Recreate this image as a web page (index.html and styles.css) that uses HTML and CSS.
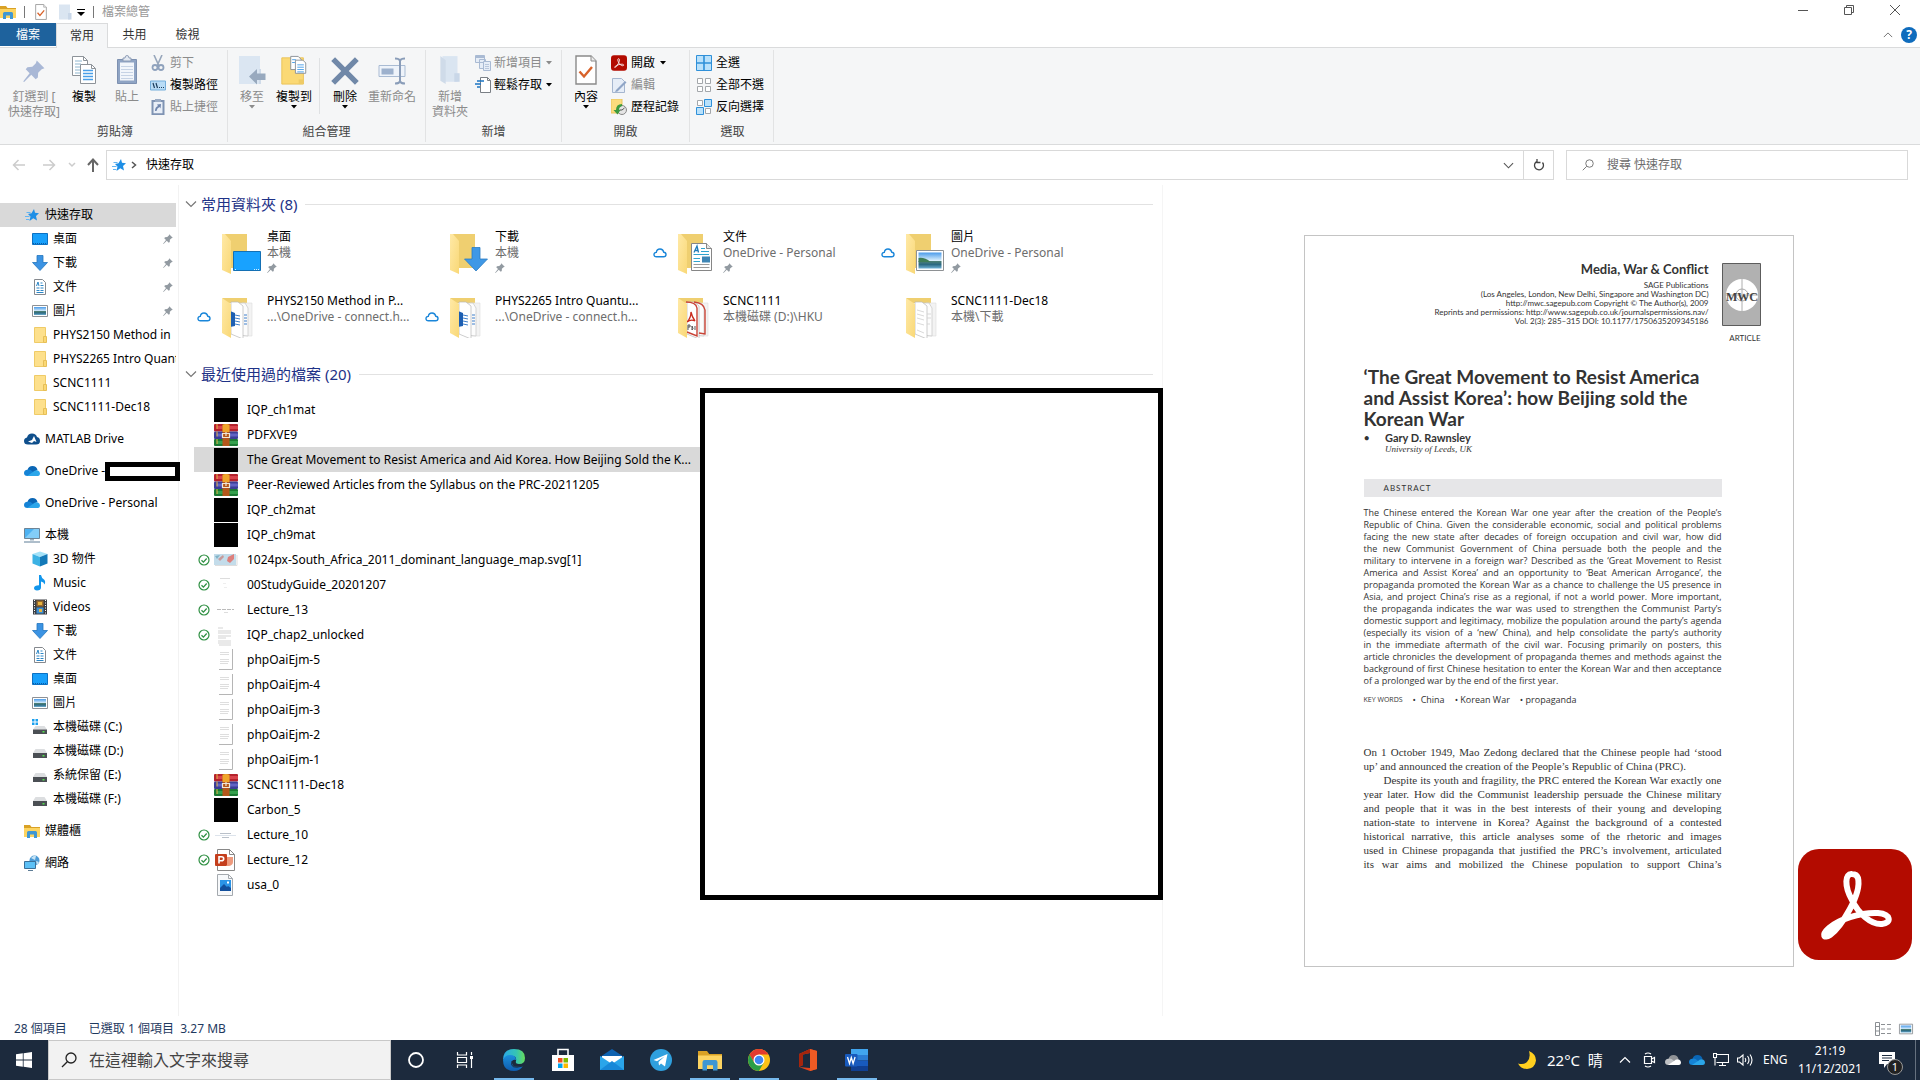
FILE: index.html
```html
<!DOCTYPE html>
<html lang="zh-Hant">
<head>
<meta charset="utf-8">
<meta name="viewport" content="width=device-width, initial-scale=1">
<title>檔案總管</title>
<link rel="stylesheet" href="styles.css">
</head>
<body>
<svg class="sprite" aria-hidden="true">
  <defs>
    <linearGradient id="g-flap" x1="0" x2="1" y1="0" y2="1"><stop offset="0" stop-color="#ffe9a6"/><stop offset="1" stop-color="#f9d877"/></linearGradient>
    <linearGradient id="g-sky" x1="0" x2="0" y1="0" y2="1"><stop offset="0" stop-color="#4a9bea"/><stop offset=".5" stop-color="#d9eefb"/><stop offset=".55" stop-color="#4d7f74"/><stop offset=".75" stop-color="#2c6a83"/><stop offset="1" stop-color="#6fb0d4"/></linearGradient>
    <linearGradient id="g-edge" x1="0" x2="1" y1="0" y2="0"><stop offset="0" stop-color="#2aa8e8"/><stop offset=".6" stop-color="#35c4b4"/><stop offset="1" stop-color="#67dc5a"/></linearGradient>
    <linearGradient id="g-edge2" x1="0" x2="0" y1="0" y2="1"><stop offset="0" stop-color="#1b8fdc"/><stop offset="1" stop-color="#0f5cae"/></linearGradient>
  </defs>
  <symbol id="explorer" viewBox="0 0 16 16"><path d="M0 2h6l1.500 2H16v3H0z" fill="#d9a125"/><path d="M0 5h16v9H0z" fill="#fcd462"/><path d="M3 15V9.500q0-1.500 1.500-1.500h7q1.500 0 1.500 1.500V15h-3v-3.500H6V15z" fill="#3f97d3"/></symbol>
  <symbol id="doc-check" viewBox="0 0 22 30"><path d="M1 1h15l5 5v23H1z" fill="#fff" stroke="#8a8a8a" stroke-width="1.400"/><path d="M16 1v5h5" fill="#ececec" stroke="#8a8a8a"/><path d="M4.500 16.500l4.500 5 8-9.500" fill="none" stroke="#d8622a" stroke-width="2.400"/></symbol>
  <symbol id="folder-pale" viewBox="0 0 20 28"><path d="M3 1h14v24H3z" fill="#dae5f1"/><path d="M1 1l5 4v22l-5-3z" fill="#cfdbe9"/><path d="M14 17h5v8h-5z" fill="#c9d7e8"/></symbol>
  <symbol id="folder-flat" viewBox="0 0 14 16"><path d="M1 .500h11v15H1z" fill="#dae5f1"/><path d="M10 9h3.500v6.500H10z" fill="#c9d7e8"/></symbol>
  <symbol id="pin" viewBox="0 0 20 20"><path d="M12.500.500l7 7-2.500.800-3.200 3.200-.300 4.500-2 1.500-4-4L1 20H.500v-1L6 12 2.500 8.500 4 6.500l4.500-.300L11.700 3z" fill="currentColor"/></symbol>
  <symbol id="copy" viewBox="0 0 26 30"><g fill="#fff" stroke="#8d9399"><path d="M1.500 1.500h11l4 4v15h-15z"/><path d="M9.500 9.500h11l4 4v15h-15z"/></g><path d="M12.500 1.500v4h4M20.500 9.500v4h4" fill="none" stroke="#8d9399"/><path d="M4 6h7M4 9h6M4 12h5M4 15h5M4 18h5" stroke="#8fb6cf"/><path d="M12 15.500h10M12 18.500h10M12 21.500h10M12 24.500h10" stroke="#4a9fe8" stroke-width="1.600"/></symbol>
  <symbol id="paste" viewBox="0 0 22 30"><path d="M1.500 4.500h19v24h-19z" fill="#8fa4c4" stroke="#7d90b0"/><path d="M4 7.500h14v18H4z" fill="#f2f6fb"/><path d="M7 6V3h2q0-2.500 2-2.500T13 3h2v3z" fill="#e3e9f2" stroke="#8c9cb5"/><path d="M5 11.500h12M5 14.500h12M5 17.500h12M5 20.500h12M5 23.500h12" stroke="#c6d3e5"/></symbol>
  <symbol id="cut" viewBox="0 0 16 16"><path d="M4 0l5 11M12 0L7 11" stroke="#97a6bb" stroke-width="1.600"/><g fill="none" stroke="#8fa2bd" stroke-width="1.800"><circle cx="5" cy="12.500" r="2.500"/><circle cx="11" cy="12.500" r="2.500"/></g></symbol>
  <symbol id="path" viewBox="0 0 16 16"><path d="M.500 4h15v9H.500z" fill="#b9dcf6" stroke="#74aedb"/><path d="M3 6l1.500 5M6 6l1.500 5" stroke="#1c3e5e" stroke-width="1.200"/><path d="M9 10h1v1H9zM11 10h1v1h-1zM13 10h1v1h-1z" fill="#1c3e5e"/></symbol>
  <symbol id="shortcut" viewBox="0 0 16 16"><path d="M2.500 2h11v13.300h-11z" fill="#e8eef7" stroke="#7f93b3" stroke-width="2"/><path d="M5 0h6v3H5z" fill="#9aabc4"/><path d="M5 12q0-4 3-5L7 5.500l4-.500-.500 4.500L9.500 8Q7 9 6.500 12z" fill="#6f86ad"/></symbol>
  <symbol id="moveto" viewBox="0 0 28 30"><path d="M1 1h21v28H1z" fill="#dbe6f2"/><path d="M22 29V14" stroke="#cfdbe9" stroke-width="2"/><path d="M11 21.500L19 14v4.500h8.500v6.500H19v4.500z" fill="#98a9be"/></symbol>
  <symbol id="copyto" viewBox="0 0 28 32"><path d="M1 3h23v28H1z" fill="#fbd975" stroke="#eac258"/><path d="M19 26h5v5h-5z" fill="#efcb66"/><path d="M10.500 1.500h8l3 3v11h-11z" fill="#fff" stroke="#8a9097"/><path d="M15.500 5.500h8l3 3v11h-11z" fill="#fff" stroke="#8a9097"/><path d="M17.500 10.500h7M17.500 13h7M17.500 15.500h7M17.500 18h7M12 5h4M12 8h3" stroke="#4a9fe8"/></symbol>
  <symbol id="delete" viewBox="0 0 26 26"><path d="M2 2l22 22M24 2L2 24" stroke="#7088a8" stroke-width="5"/></symbol>
  <symbol id="rename" viewBox="0 0 28 28"><path d="M1 8.500h26v11H1z" fill="#eef3fa" stroke="#a9bbd3"/><path d="M3.500 11.500h12v6h-12z" fill="#9db1cd"/><path d="M17 1.500q4 0 5 2 1-2 5-2M17 26.500q4 0 5-2 1 2 5 2M22 3v22" fill="none" stroke="#8a9db9" stroke-width="2"/></symbol>
  <symbol id="newitem" viewBox="0 0 16 16"><g fill="#e6edf7" stroke="#a9bad3"><path d="M.500.500h9v7h-9zM4.500 4.500h6v9h-6z"/><path d="M8.500 6.500h7v9h-7z"/></g><path d="M.500 1h9v2H.500z" fill="#a9bad3"/><path d="M10 9.500h4M10 11.500h4M10 13.500h4" stroke="#b9c7dc"/></symbol>
  <symbol id="easy" viewBox="0 0 16 16"><path d="M5.500.500h7l3 3v12h-10z" fill="#fff" stroke="#7a7f85"/><path d="M12.500.500v3h3" fill="none" stroke="#7a7f85"/><path d="M2 4h7M0 7h6M2 10h3" stroke="#1d76c4" stroke-width="1.500"/></symbol>
  <symbol id="acro" viewBox="0 0 114 111"><rect width="114" height="111" rx="21" fill="#b30b00"/><path d="M54 25C47 24 46 37 54 51C60 64 73 76 84 75C94 74 93 65 80 64C62 63 40 71 31 79C23 86 26 90 32 86C43 78 64 45 60 29C59 26 57 25 54 25Z" fill="none" stroke="#fff" stroke-width="6"/></symbol>
  <symbol id="edit" viewBox="0 0 16 16"><path d="M1.500 1.500h9l3 3v11h-12z" fill="#e6edf7" stroke="#a5b6cf"/><path d="M5 13L14 4l1.500 1.500-9 9-2.500.500z" fill="#8fa5c6"/></symbol>
  <symbol id="history" viewBox="0 0 16 16"><path d="M0 0h11v14H0z" fill="#fbdc7d" stroke="#e9c45c"/><circle cx="11" cy="11" r="4.500" fill="#e5e5e5" stroke="#888"/><path d="M11 11l2.500-2M11 11H8.500" stroke="#555"/><path d="M11 5Q5 5 5 11H2.500l4 4.500 3-4.500H8q0-3 3-4z" fill="#3c9a3e"/></symbol>
  <symbol id="sel-all" viewBox="0 0 16 16"><path d="M.500.500h15v15H.500z" fill="#b9e1fb" stroke="#2f90d9"/><path d="M8 0v16M0 8h16" stroke="#2f90d9" stroke-width="1.600"/></symbol>
  <symbol id="sel-none" viewBox="0 0 16 16"><path d="M1.500 1.500h5v5h-5zM9.500 1.500h5v5h-5zM1.500 9.500h5v5h-5zM9.500 9.500h5v5h-5z" fill="#fff" stroke="#a3a7ab"/></symbol>
  <symbol id="sel-inv" viewBox="0 0 16 16"><path d="M1.500 1.500h5v5h-5zM9.500 9.500h5v5h-5z" fill="#fff" stroke="#a3a7ab"/><path d="M8.500.500h7v7h-7zM.500 8.500h7v7h-7z" fill="#b9e1fb" stroke="#2f90d9"/></symbol>
  <symbol id="star" viewBox="0 0 16 16"><path d="M10 2l1 3.800 4 .500-3 2.700 1 4.500L9.300 11.300 5.500 14l1-4.500L4 7l3.500-.800z" fill="#1e8fe6"/><path d="M2.500 5.500h4M1 9.500h4.500M2 12.500h3.500" stroke="#64b5f2" stroke-width="1.200"/></symbol>
  <symbol id="desktop" viewBox="0 0 16 16"><path d="M.500 2.500h15v11H.500z" fill="#18a0fb" stroke="#0c71c3"/><path d="M1 12.500h14" stroke="#0a5da6" stroke-dasharray="1 1"/></symbol>
  <symbol id="down" viewBox="0 0 16 16"><path d="M5 .500h6v7h4.500L8 15.500.500 7.500H5z" fill="#3b93e3" stroke="#2376be" stroke-width=".800"/></symbol>
  <symbol id="docs" viewBox="0 0 16 16"><path d="M2.500.500h8l3 3v12h-11z" fill="#fff" stroke="#85898e"/><path d="M4.500 7L6 3l1 4M8.500 4h2M8.500 6.500h3M4.500 9h3M8.500 9h3M4.500 11.500h3M8.500 11.500h3M4.500 13.500h7" stroke="#2c86c6" fill="none"/></symbol>
  <symbol id="pics" viewBox="0 0 16 16"><path d="M.500 2.500h15v11H.500z" fill="#fff" stroke="#8d9196"/><path d="M2 4h12v8H2z" fill="url(#g-sky)"/></symbol>
  <symbol id="folder" viewBox="0 0 16 16"><path d="M2.500.500h11v15h-11z" fill="#fde08c" stroke="#efcb67"/><path d="M11.500 9.500h3v6h-3z" fill="#fbd873" stroke="#e6bf58"/></symbol>
  <symbol id="matlab" viewBox="0 0 16 16"><path d="M4 13.500Q0 13.500 0 10q0-3 3-3.500Q4 2.500 8 2.500t5 3.500q3 .500 3 4 0 3.500-4 3.500z" fill="#0f4f8c"/><path d="M4 10.500L8 9l2-4 2.500 6L10 10l-2 2z" fill="#fff"/></symbol>
  <symbol id="onedrive" viewBox="0 0 16 16"><path d="M3.500 7Q4.500 3 8.500 3t5 4l-6 3z" fill="#0a66b5"/><path d="M3.500 13Q0 13 0 10t3.500-3.200Q6 6 8.500 8.500L15 13z" fill="#1583d6"/><path d="M3 13l6-4q2-2.300 5-1.500 2 .900 2 3 0 2.500-2.800 2.500z" fill="#2ba6ea"/></symbol>
  <symbol id="cloud-gray" viewBox="0 0 16 16"><path d="M3.500 7Q4.500 3 8.500 3t5 4l-6 3z" fill="#8f9296"/><path d="M3.500 13Q0 13 0 10t3.500-3.200Q6 6 8.500 8.500L15 13z" fill="#bfc1c4"/><path d="M3 13l6-4q2-2.300 5-1.500 2 .900 2 3 0 2.500-2.800 2.500z" fill="#fff"/></symbol>
  <symbol id="pc" viewBox="0 0 16 16"><path d="M.500 1.500h15v10H.500z" fill="#4db2f2" stroke="#6d8496"/><path d="M1 11l9-9h5v9z" fill="#83cdf8"/><path d="M6 12h4v1.500H6z" fill="#9bb0c0"/><path d="M0 15h16" stroke="#5d7c96"/></symbol>
  <symbol id="cube" viewBox="0 0 16 16"><path d="M8 .500L15.500 3 8 6 .500 3z" fill="#a4e2f8"/><path d="M.500 3L8 6v9.500L.500 12.500z" fill="#3cb2e4"/><path d="M15.500 3L8 6v9.500l7.500-3z" fill="#1379b8"/></symbol>
  <symbol id="music" viewBox="0 0 16 16"><path d="M7 0h2q.500 3 3 4.500 2 2 .500 5Q12 7 9 6.500v6Q9 15.500 5 15.500 2 15.300 2 13q.300-2.500 5-2.700z" fill="#1296ec"/></symbol>
  <symbol id="video" viewBox="0 0 16 16"><path d="M1 .500h14v15H1z" fill="#3a3d42"/><path d="M2.500 1v15M13.500 1v15" stroke="#fff" stroke-dasharray="1 1.500"/><path d="M4.500 1.500h7v6h-7z" fill="#9a6b2c"/><path d="M4.500 8.500h7v6h-7z" fill="#3c8fd2"/><path d="M6 3h4v3H6zM7 10h3v3H7z" fill="#e8b43f"/></symbol>
  <symbol id="drive" viewBox="0 0 16 16"><path d="M3.500 6h9L15 10H1z" fill="#dcdee0"/><path d="M1 10h14v5H1z" fill="#4b4f54"/><path d="M10.500 12h2v1.500h-2z" fill="#52e04c"/></symbol>
  <symbol id="drive-win" viewBox="0 0 16 16"><path d="M3.500 7h9L15 10.500H1z" fill="#dcdee0"/><path d="M1 10.500h14V15H1z" fill="#4b4f54"/><path d="M10.500 12h2v1.500h-2z" fill="#52e04c"/><path d="M0 0h2.500v2.500H0zM3.500 0H6v2.500H3.500zM0 3.500h2.500V6H0zM3.500 3.500H6V6H3.500z" fill="#1ba0ee"/></symbol>
  <symbol id="net" viewBox="0 0 16 16"><circle cx="10.500" cy="5.500" r="5" fill="#4c9bd6"/><path d="M7 3q3-3 5-2l-1 4zM12 6l3 1-2 3z" fill="#c6e3f4"/><path d="M.500 6.500h11v7H.500z" fill="#5cc0f6" stroke="#3a6f99"/><path d="M4 15.500h5" stroke="#5d7c96"/></symbol>
  <symbol id="cloud" viewBox="0 0 14 12"><path d="M3.500 9.800Q1 9.800 1 7.600T3.300 5.400Q3.800 2 7 2t3.700 3.200Q13 5.300 13 7.500T10.600 9.800z" fill="none" stroke="#1a86d9" stroke-width="1.400"/></symbol>
  <symbol id="ok" viewBox="0 0 12 12"><circle cx="6" cy="6" r="5" fill="#fff" stroke="#2e8f42" stroke-width="1.200"/><path d="M3.500 6.200l1.900 1.900 3.300-3.600" fill="none" stroke="#2e8f42" stroke-width="1.300"/></symbol>
  <symbol id="chev" viewBox="0 0 12 12"><path d="M1 3.500l5 5 5-5" fill="none" stroke="currentColor" stroke-width="1.200"/></symbol>
  <symbol id="tri" viewBox="0 0 6 4"><path d="M0 0h6L3 3.500z" fill="currentColor"/></symbol>
  <symbol id="big-folder" viewBox="0 0 40 40"><path d="M3 0h22v34H3z" fill="#efcf70"/><path d="M0 0h3l6 7v33l-9-4z" fill="url(#g-flap)"/></symbol>
  <symbol id="f-desktop" viewBox="0 0 40 40"><use href="#big-folder"/><path d="M11.500 17.500h27v19h-27z" fill="#18a2ff" stroke="#1470b4"/><path d="M13 35.500h2M32 35.500h5" stroke="#d8f0ff" stroke-dasharray="1 1"/></symbol>
  <symbol id="f-down" viewBox="0 0 40 40"><use href="#big-folder"/><path d="M22 13.500h8V25h7.500L26 37 14.500 25H22z" fill="#3f98e6" stroke="#2c7cc2" stroke-width=".800"/></symbol>
  <symbol id="f-docs" viewBox="0 0 40 40"><use href="#big-folder"/><path d="M13.500 9.500h15l5 5v22h-20z" fill="#fff" stroke="#868686"/><path d="M28.500 9.500v5h5" fill="#e6e6e6" stroke="#868686"/><path d="M16 18.500l3-6.500 1.500 6.500M17 16.500h3" fill="none" stroke="#1f7bb8" stroke-width="1.300"/><path d="M23 14.500h4M23 17.500h8M15.500 20.500H31M15.500 24.500H22M15.500 27.500H22" stroke="#2fa4cf"/><path d="M15.500 30.500h16M15.500 33.500h16" stroke="#9a9a9a"/><path d="M24 22.500h8v6h-8z" fill="#3f86b5"/></symbol>
  <symbol id="f-pics" viewBox="0 0 40 40"><use href="#big-folder"/><path d="M10.500 16.500h27v20h-27z" fill="#fff" stroke="#8e9194"/><path d="M12.500 18.500h23v16h-23z" fill="url(#g-sky)"/><path d="M12.500 24q6-1 12 4h-12z" fill="#3f7d57"/></symbol>
  <symbol id="f-open" viewBox="0 0 40 40"><path d="M0 0h25v5H3z" fill="#efcf70"/><path d="M20 5h10v33H20z" fill="#f3f3f3" stroke="#ddd" stroke-width=".600"/><path d="M17 5h6l3 5v28l-9-1z" fill="#fcfcfc" stroke="#c6c6c6" stroke-width=".700"/><path d="M9 4h7l5 4v33l-12-5z" fill="#fff" stroke="#b7b7b7" stroke-width=".700"/></symbol>
  <symbol id="f-flap" viewBox="0 0 40 40"><path d="M0 0l9 6v34l-9-5z" fill="url(#g-flap)"/></symbol>
  <symbol id="f-word" viewBox="0 0 40 40"><use href="#f-open"/><path d="M8 13l5 2v13l-5 1z" fill="#1d5fb2"/><path d="M13 17l5 1M13 20l5 1M13 23l5 1M13 26l5 1M22 17h3M22 20h3M22 23h3M22 26h3" stroke="#3e7fca"/><use href="#f-flap"/></symbol>
  <symbol id="f-pdf" viewBox="0 0 40 40"><use href="#f-open"/><path d="M8 4q10 0 11 6v28l-10-4M16 4q10 1 11 8v24l-6-1" fill="none" stroke="#c94437" stroke-width="1.400"/><path d="M9 24q4-4 4-10 1 5 4 9-4-2-8 1" fill="none" stroke="#c8281c" stroke-width="1.300"/><use href="#f-flap"/><path d="M10 27v5M10 27h2v2h-2M14 28v4q2-1 0-4M17 28v4" fill="none" stroke="#444" stroke-width=".900"/></symbol>
  <symbol id="f-text" viewBox="0 0 40 40"><use href="#f-open"/><path d="M11 12l7 2M11 16l7 2M11 20l7 2M11 25l7 2M11 32l7 3M21 16h4M21 20h4M21 26h3" stroke="#cfcfcf" stroke-width=".800"/><use href="#f-flap"/></symbol>
  <symbol id="black" viewBox="0 0 24 24"><path d="M0 0h24v24H0z"/></symbol>
  <symbol id="rar" viewBox="0 0 24 24"><rect y="1" width="24" height="7.500" rx="1" fill="#b5222c"/><path d="M3 3h21v3H3z" fill="#d9434c"/><rect y="8.500" width="24" height="7.500" rx="1" fill="#3b3d96"/><path d="M3 10.500h21v3H3z" fill="#6163c4"/><rect y="16" width="24" height="7" rx="1" fill="#1d7a34"/><path d="M3 18h21v3H3z" fill="#35a04d"/><path d="M3 1v22" stroke="#e9b949" stroke-dasharray="5 2.500"/><path d="M8.500 1h7v22h-7z" fill="#b4571b"/><path d="M8.500 2q3.500-2 7 0v7h-7z" fill="#f0a52b"/><path d="M8.500 10.500h7v4h-7z" fill="none" stroke="#efe7d8" stroke-width="1.200"/><path d="M12 9v4" stroke="#efe7d8" stroke-width="1.200"/></symbol>
  <symbol id="map" viewBox="0 0 24 24"><path d="M0 6h22v11H0z" fill="#c3dcea"/><path d="M14 9l6-3v5l-4 4-3-2z" fill="#dd7f7c"/><path d="M4 11l5-4 1 2-4 4z" fill="#c79a9b"/><path d="M1 8l5-1-3 4z" fill="#7fb2c6"/><path d="M1 17.500h22V7" fill="none" stroke="#ddd"/></symbol>
  <symbol id="faint1" viewBox="0 0 24 24"><path d="M6 5.500h10" stroke="#ddd"/><path d="M9 10.500h3M10 14.500h3" stroke="#eee"/></symbol>
  <symbol id="faint2" viewBox="0 0 24 24"><path d="M3 11.500h17" stroke="#bbb" stroke-dasharray="4 1"/><path d="M10 14.500h4" stroke="#ddd"/></symbol>
  <symbol id="faint3" viewBox="0 0 24 24"><path d="M1 12.500h21" stroke="#dde4ec"/><path d="M6 10.500h11M8 14.500h7" stroke="#b9c0c9"/></symbol>
  <symbol id="textdoc" viewBox="0 0 24 24"><path d="M4 5h5M4 8h13M4 10h13M4 13h13M4 15h8M4 18h13M4 20h13M5 22h12" stroke="#d3d3d3"/></symbol>
  <symbol id="scan" viewBox="0 0 24 24"><path d="M5 21.500h13.500V1" fill="none" stroke="#b5b5b5"/><path d="M6 4.500h9M6 6.500h9M6 11.500h9M6 13.500h9M6 15.500h8" stroke="#dedede"/></symbol>
  <symbol id="ppt" viewBox="0 0 24 24"><path d="M3.500 1.500h12l5 5v16h-17z" fill="#fff" stroke="#888"/><path d="M15.500 1.500v5h5" fill="none" stroke="#888"/><path d="M13 9h6v5q0 3-4 4h-2z" fill="#ee9a7d"/><rect x="1" y="6" width="12" height="12" rx="1" fill="#c43e1c"/><path d="M5 15.500V8.800h2.500q2.200 0 2.200 2t-2.200 2H5" fill="none" stroke="#fff" stroke-width="1.600"/></symbol>
  <symbol id="image" viewBox="0 0 24 24"><path d="M3.500 1.500h11l4 4v17h-15z" fill="#f7f9fb" stroke="#a4a9ae"/><path d="M14.500 1.500v4h4" fill="none" stroke="#a4a9ae"/><path d="M6 7h11v11H6z" fill="#2b94e6"/><path d="M6 15l4-4 3 3 1-1 3 2v3H6z" fill="#124f9c"/><path d="M13 8.500h2v2h-2z" fill="#fff"/></symbol>
  <symbol id="lens" viewBox="0 0 16 16"><circle cx="10" cy="6" r="5" fill="none" stroke="currentColor" stroke-width="1.300"/><path d="M6.300 9.700L1 15" stroke="currentColor" stroke-width="1.300"/></symbol>
  <symbol id="edge" viewBox="0 0 24 24"><path d="M1 12Q1 1 12 1t11 9q0 6-6 6-4 0-3-3 1-5-4-5-6 0-9 4z" fill="url(#g-edge)"/><path d="M1 12q2-5 7-5 6 0 6 5-2-1-4 1-1 8 11 5-3 5-9 5Q1 23 1 12z" fill="url(#g-edge2)"/><path d="M10 13q-3 9 11 5" fill="none" stroke="#1c2c40" stroke-width="1"/></symbol>
  <symbol id="store" viewBox="0 0 24 24"><path d="M1 7h22v16H1z" fill="#fff"/><path d="M7 7V1.500h10V7" fill="none" stroke="#fff" stroke-width="1.600"/><path d="M7 10h4.500v4.500H7z" fill="#f04e23"/><path d="M12.500 10H17v4.500h-4.500z" fill="#7fba00"/><path d="M7 15.500h4.500V20H7z" fill="#00a4ef"/><path d="M12.500 15.500H17V20h-4.500z" fill="#ffb900"/></symbol>
  <symbol id="mail" viewBox="0 0 24 24"><path d="M0 9L12 1l12 8v13H0z" fill="#0e62b0"/><path d="M2 8h20v8H2z" fill="#fff"/><path d="M0 8l12 8L24 8v14H0z" fill="#2aa5ea"/><path d="M0 22l12-9 12 9z" fill="#1788d8"/></symbol>
  <symbol id="telegram" viewBox="0 0 24 24"><circle cx="12" cy="12" r="11" fill="#2fa0de"/><path d="M4.500 12L18.500 6l-2.500 12.500-4-3-2 2-.500-3.500 6-5.500-7.500 4.700z" fill="#fff"/></symbol>
  <symbol id="chrome" viewBox="0 0 24 24"><circle cx="12" cy="12" r="11" fill="#fbc116"/><path d="M2.500 6.500A11 11 0 0 1 21.500 6.500H12L7.300 14.700z" fill="#e33b2e"/><path d="M2.500 6.500L7.300 14.700 12 17.500l4.700-2.700L12 23A11 11 0 0 1 2.500 6.500z" fill="#2b9e48"/><circle cx="12" cy="12" r="5.500" fill="#fff"/><circle cx="12" cy="12" r="4.300" fill="#4087f2"/></symbol>
  <symbol id="office" viewBox="0 0 24 24"><path d="M3 6l11-5 7 2v18l-7 2-11-4 11 1V5L7 6.500V17l-4 2z" fill="#e2421b"/><path d="M14 1l7 2v18l-7 2z" fill="#ee5a24"/><path d="M3 6l11-5v4L7 6.500V17l-4 2z" fill="#a5250d"/></symbol>
  <symbol id="word" viewBox="0 0 24 24"><path d="M6 1h17v6H6z" fill="#41a5ee"/><path d="M6 7h17v5.500H6z" fill="#2b7cd3"/><path d="M6 12.500h17V18H6z" fill="#185abd"/><path d="M6 18h17v5H6z" fill="#103f91"/><rect y="6" width="12.500" height="12.500" rx="1" fill="#185abd"/><path d="M2.500 9l2 6.500 1.800-6 1.800 6 2-6.500" fill="none" stroke="#fff" stroke-width="1.300"/></symbol>
</svg>

<header>
  <div class="titlebar">
    <div class="quick">
      <svg class="i16"><use href="#explorer"/></svg><i class="tick"></i>
      <svg class="i16"><use href="#doc-check"/></svg>
      <svg class="i16"><use href="#folder-flat"/></svg>
      <svg class="qdrop" viewBox="0 0 8 7"><path d="M0 0h8v1H0zM0 3h8L4 7z"/></svg><i class="tick"></i>
      <span class="win-title">檔案總管</span>
    </div>
    <div class="controls">
      <button aria-label="最小化"><svg viewBox="0 0 10 10"><path d="M0 5.500h10"/></svg></button>
      <button aria-label="還原"><svg viewBox="0 0 10 10"><path d="M.500 2.500h7v7h-7zM2.500 2.500v-2h7v7h-2"/></svg></button>
      <button aria-label="關閉"><svg viewBox="0 0 10 10"><path d="M0 0l10 10M10 0L0 10"/></svg></button>
    </div>
  </div>
  <nav class="tabs">
    <button class="tab file">檔案</button>
    <button class="tab active">常用</button>
    <button class="tab">共用</button>
    <button class="tab">檢視</button>
    <div class="help">
      <button aria-label="摺疊功能區"><svg class="up"><use href="#chev"/></svg></button>
      <button class="q" aria-label="說明">?</button>
    </div>
  </nav>
  <div class="ribbon">
    <section class="group g1">
      <div class="tools">
        <button class="big wide off"><svg class="pinbig"><use href="#pin"/></svg><span>釘選到 [<br>快速存取]</span></button>
        <button class="big"><svg><use href="#copy"/></svg><span>複製</span></button>
        <button class="big off"><svg><use href="#paste"/></svg><span>貼上</span></button>
        <div class="small">
          <button class="off"><svg><use href="#cut"/></svg>剪下</button>
          <button><svg><use href="#path"/></svg>複製路徑</button>
          <button class="off"><svg><use href="#shortcut"/></svg>貼上捷徑</button>
        </div>
      </div>
      <h2>剪貼簿</h2>
    </section>
    <section class="group g2">
      <div class="tools">
        <button class="big off"><svg><use href="#moveto"/></svg><span>移至</span><svg class="tri"><use href="#tri"/></svg></button>
        <button class="big"><svg><use href="#copyto"/></svg><span>複製到</span><svg class="tri"><use href="#tri"/></svg></button>
        <i class="split"></i>
        <button class="big"><svg class="sq"><use href="#delete"/></svg><span>刪除</span><svg class="tri"><use href="#tri"/></svg></button>
        <button class="big wide off"><svg class="sq"><use href="#rename"/></svg><span>重新命名</span></button>
      </div>
      <h2>組合管理</h2>
    </section>
    <section class="group g3">
      <div class="tools">
        <button class="big off"><svg><use href="#folder-pale"/></svg><span>新增<br>資料夾</span></button>
        <div class="small">
          <button class="off"><svg><use href="#newitem"/></svg>新增項目<svg class="tri"><use href="#tri"/></svg></button>
          <button><svg><use href="#easy"/></svg>輕鬆存取<svg class="tri"><use href="#tri"/></svg></button>
        </div>
      </div>
      <h2>新增</h2>
    </section>
    <section class="group g4">
      <div class="tools">
        <button class="big"><svg><use href="#doc-check"/></svg><span>內容</span><svg class="tri"><use href="#tri"/></svg></button>
        <div class="small">
          <button><svg><use href="#acro"/></svg>開啟<svg class="tri"><use href="#tri"/></svg></button>
          <button class="off"><svg><use href="#edit"/></svg>編輯</button>
          <button><svg><use href="#history"/></svg>歷程記錄</button>
        </div>
      </div>
      <h2>開啟</h2>
    </section>
    <section class="group g5">
      <div class="tools">
        <div class="small">
          <button><svg><use href="#sel-all"/></svg>全選</button>
          <button><svg><use href="#sel-none"/></svg>全部不選</button>
          <button><svg><use href="#sel-inv"/></svg>反向選擇</button>
        </div>
      </div>
      <h2>選取</h2>
    </section>
  </div>
  <div class="location">
    <div class="history">
      <button aria-label="上一頁"><svg viewBox="0 0 14 14"><path d="M13 7H1.500M6.500 2l-5 5 5 5"/></svg></button>
      <button aria-label="下一頁"><svg viewBox="0 0 14 14"><path d="M1 7h11.500M7.500 2l5 5-5 5"/></svg></button>
      <button class="recent" aria-label="最近"><svg viewBox="0 0 14 14"><path d="M4 5l3 3 3-3"/></svg></button>
      <button class="strong" aria-label="上一層"><svg viewBox="0 0 14 14"><path d="M7 14V1.500M2 7l5-5.500L12 7"/></svg></button>
    </div>
    <div class="address">
      <svg class="i16"><use href="#star"/></svg>
      <svg class="crumb" viewBox="0 0 8 8"><path d="M2 1l3.500 3L2 7"/></svg>
      <a href="#">快速存取</a>
      <button class="drop" aria-label="先前的位置"><svg><use href="#chev"/></svg></button>
      <button class="refresh" aria-label="重新整理"><svg viewBox="0 0 12 12"><path d="M9.500 3.500A4.500 4.500 0 1 1 4 2.300M4 0v3.500h3.500"/></svg></button>
    </div>
    <label class="search"><svg><use href="#lens"/></svg><input type="text" placeholder="搜尋 快速存取" aria-label="搜尋 快速存取"></label>
  </div>
</header>

<main>
  <nav class="tree">
    <ul>
      <li><a class="root current" href="#"><svg><use href="#star"/></svg>快速存取</a></li>
      <li><a href="#"><svg><use href="#desktop"/></svg>桌面<svg class="pin"><use href="#pin"/></svg></a></li>
      <li><a href="#"><svg><use href="#down"/></svg>下載<svg class="pin"><use href="#pin"/></svg></a></li>
      <li><a href="#"><svg><use href="#docs"/></svg>文件<svg class="pin"><use href="#pin"/></svg></a></li>
      <li><a href="#"><svg><use href="#pics"/></svg>圖片<svg class="pin"><use href="#pin"/></svg></a></li>
      <li><a href="#"><svg><use href="#folder"/></svg>PHYS2150 Method in</a></li>
      <li><a href="#"><svg><use href="#folder"/></svg>PHYS2265 Intro Quantum</a></li>
      <li><a href="#"><svg><use href="#folder"/></svg>SCNC1111</a></li>
      <li><a href="#"><svg><use href="#folder"/></svg>SCNC1111-Dec18</a></li>
    </ul>
    <ul><li><a class="root" href="#"><svg><use href="#matlab"/></svg>MATLAB Drive</a></li></ul>
    <ul><li class="masked"><a class="root" href="#"><svg><use href="#onedrive"/></svg>OneDrive -</a><span class="mask"></span></li></ul>
    <ul><li><a class="root" href="#"><svg><use href="#onedrive"/></svg>OneDrive - Personal</a></li></ul>
    <ul>
      <li><a class="root" href="#"><svg><use href="#pc"/></svg>本機</a></li>
      <li><a href="#"><svg><use href="#cube"/></svg>3D 物件</a></li>
      <li><a href="#"><svg><use href="#music"/></svg>Music</a></li>
      <li><a href="#"><svg><use href="#video"/></svg>Videos</a></li>
      <li><a href="#"><svg><use href="#down"/></svg>下載</a></li>
      <li><a href="#"><svg><use href="#docs"/></svg>文件</a></li>
      <li><a href="#"><svg><use href="#desktop"/></svg>桌面</a></li>
      <li><a href="#"><svg><use href="#pics"/></svg>圖片</a></li>
      <li><a href="#"><svg><use href="#drive-win"/></svg>本機磁碟 (C:)</a></li>
      <li><a href="#"><svg><use href="#drive"/></svg>本機磁碟 (D:)</a></li>
      <li><a href="#"><svg><use href="#drive"/></svg>系統保留 (E:)</a></li>
      <li><a href="#"><svg><use href="#drive"/></svg>本機磁碟 (F:)</a></li>
    </ul>
    <ul><li><a class="root" href="#"><svg><use href="#explorer"/></svg>媒體櫃</a></li></ul>
    <ul><li><a class="root" href="#"><svg><use href="#net"/></svg>網路</a></li></ul>
  </nav>

  <div class="content">
    <h3 class="heading"><svg><use href="#chev"/></svg>常用資料夾 (8)</h3>
    <ul class="tiles">
      <li><span class="state"></span><svg class="pic"><use href="#f-desktop"/></svg><div><b>桌面</b><small>本機</small><svg class="pin"><use href="#pin"/></svg></div></li>
      <li><span class="state"></span><svg class="pic"><use href="#f-down"/></svg><div><b>下載</b><small>本機</small><svg class="pin"><use href="#pin"/></svg></div></li>
      <li><span class="state"><svg><use href="#cloud"/></svg></span><svg class="pic"><use href="#f-docs"/></svg><div><b>文件</b><small>OneDrive - Personal</small><svg class="pin"><use href="#pin"/></svg></div></li>
      <li><span class="state"><svg><use href="#cloud"/></svg></span><svg class="pic"><use href="#f-pics"/></svg><div><b>圖片</b><small>OneDrive - Personal</small><svg class="pin"><use href="#pin"/></svg></div></li>
      <li><span class="state"><svg><use href="#cloud"/></svg></span><svg class="pic"><use href="#f-word"/></svg><div><b>PHYS2150 Method in P...</b><small>...\OneDrive - connect.h...</small></div></li>
      <li><span class="state"><svg><use href="#cloud"/></svg></span><svg class="pic"><use href="#f-word"/></svg><div><b>PHYS2265 Intro Quantu...</b><small>...\OneDrive - connect.h...</small></div></li>
      <li><span class="state"></span><svg class="pic"><use href="#f-pdf"/></svg><div><b>SCNC1111</b><small>本機磁碟 (D:)\HKU</small></div></li>
      <li><span class="state"></span><svg class="pic"><use href="#f-text"/></svg><div><b>SCNC1111-Dec18</b><small>本機\下載</small></div></li>
    </ul>
    <h3 class="heading second"><svg><use href="#chev"/></svg>最近使用過的檔案 (20)</h3>
    <div class="recent-files">
      <ul class="files">
        <li><span class="state"></span><svg><use href="#black"/></svg>IQP_ch1mat</li>
        <li><span class="state"></span><svg><use href="#rar"/></svg>PDFXVE9</li>
        <li class="selected"><span class="state"></span><svg><use href="#black"/></svg>The Great Movement to Resist America and Aid Korea. How Beijing Sold the K...</li>
        <li><span class="state"></span><svg><use href="#rar"/></svg>Peer-Reviewed Articles from the Syllabus on the PRC-20211205</li>
        <li><span class="state"></span><svg><use href="#black"/></svg>IQP_ch2mat</li>
        <li><span class="state"></span><svg><use href="#black"/></svg>IQP_ch9mat</li>
        <li><span class="state"><svg><use href="#ok"/></svg></span><svg><use href="#map"/></svg>1024px-South_Africa_2011_dominant_language_map.svg[1]</li>
        <li><span class="state"><svg><use href="#ok"/></svg></span><svg><use href="#faint1"/></svg>00StudyGuide_20201207</li>
        <li><span class="state"><svg><use href="#ok"/></svg></span><svg><use href="#faint2"/></svg>Lecture_13</li>
        <li><span class="state"><svg><use href="#ok"/></svg></span><svg><use href="#textdoc"/></svg>IQP_chap2_unlocked</li>
        <li><span class="state"></span><svg><use href="#scan"/></svg>phpOaiEjm-5</li>
        <li><span class="state"></span><svg><use href="#scan"/></svg>phpOaiEjm-4</li>
        <li><span class="state"></span><svg><use href="#scan"/></svg>phpOaiEjm-3</li>
        <li><span class="state"></span><svg><use href="#scan"/></svg>phpOaiEjm-2</li>
        <li><span class="state"></span><svg><use href="#scan"/></svg>phpOaiEjm-1</li>
        <li><span class="state"></span><svg><use href="#rar"/></svg>SCNC1111-Dec18</li>
        <li><span class="state"></span><svg><use href="#black"/></svg>Carbon_5</li>
        <li><span class="state"><svg><use href="#ok"/></svg></span><svg><use href="#faint3"/></svg>Lecture_10</li>
        <li><span class="state"><svg><use href="#ok"/></svg></span><svg><use href="#ppt"/></svg>Lecture_12</li>
        <li><span class="state"></span><svg><use href="#image"/></svg>usa_0</li>
      </ul>
      <div class="cover"></div>
    </div>
  </div>

  <aside class="preview">
    <article class="page">
      <div class="masthead">
        <div class="journal">
          <h4>Media, War &amp; Conflict</h4>
          <p>SAGE Publications<br>(Los Angeles, London, New Delhi, Singapore and Washington DC)<br>http://mwc.sagepub.com Copyright © The Author(s), 2009<br>Reprints and permissions: http://www.sagepub.co.uk/journalspermissions.nav/<br>Vol. 2(3): 285–315 DOI: 10.1177/1750635209345186</p>
        </div>
        <div class="badge">
          <svg viewBox="0 0 39 63"><path d="M.500.500h38v62H.500z" fill="#b1b1b1" stroke="#5c5c5c"/><circle cx="20" cy="32" r="16" fill="#fff"/><path d="M20 16v32M4 32h32" stroke="#999" stroke-width=".800"/><circle cx="20" cy="32" r="6" fill="none" stroke="#aaa"/><text x="20" y="38" text-anchor="middle" class="mwc">MWC</text></svg>
          <span>ARTICLE</span>
        </div>
      </div>
      <h1>‘The Great Movement to Resist America<br>and Assist Korea’: how Beijing sold the<br>Korean War</h1>
      <div class="author"><span>•</span><div><b>Gary D. Rawnsley</b><i>University of Leeds, UK</i></div></div>
      <h5>ABSTRACT</h5>
      <p class="abstract"><span>The Chinese entered the Korean War one year after the creation of the People’s</span> <span>Republic of China. Given the considerable economic, social and political problems</span> <span>facing the new state after decades of foreign occupation and civil war, how did</span> <span>the new Communist Government of China persuade both the people and the</span> <span>military to intervene in a foreign war? Described as the ‘Great Movement to Resist</span> <span>America and Assist Korea’ and an opportunity to ‘Beat American Arrogance’, the</span> <span>propaganda promoted the Korean War as a chance to challenge the US presence in</span> <span>Asia, and project China’s rise as a regional, if not a world power. More important,</span> <span>the propaganda indicates the war was used to strengthen the Communist Party’s</span> <span>domestic support and legitimacy, mobilize the population around the party’s agenda</span> <span>(especially its vision of a ‘new’ China), and help consolidate the party’s authority</span> <span>in the immediate aftermath of the civil war. Focusing primarily on posters, this</span> <span>article chronicles the development of propaganda themes and methods against the</span> <span>background of first Chinese hesitation to enter the Korean War and then acceptance</span> <span class="last">of a prolonged war by the end of the first year.</span></p>
      <div class="keys"><small>KEY WORDS</small><span>•&nbsp; China</span><span>• Korean War</span><span>• propaganda</span></div>
      <div class="text">
        <p><span>On 1 October 1949, Mao Zedong declared that the Chinese people had ‘stood</span> <span class="last">up’ and announced the creation of the People’s Republic of China (PRC).</span></p>
        <p><span class="indent">Despite its youth and fragility, the PRC entered the Korean War exactly one</span> <span>year later. How did the Communist leadership persuade the Chinese military</span> <span>and people that it was in the best interests of their young and developing</span> <span>nation-state to intervene in Korea? Against the background of a contested</span> <span>historical narrative, this article analyses some of the rhetoric and images</span> <span>used in Chinese propaganda that justified the PRC’s involvement, articulated</span> <span>its war aims and mobilized the Chinese population to support China’s</span></p>
      </div>
      <svg class="reader"><use href="#acro"/></svg>
    </article>
  </aside>
</main>

<div class="status">
  <span>28 個項目</span><span>已選取 1 個項目&nbsp; 3.27 MB</span>
  <div class="views">
    <button aria-label="詳細資料"><svg viewBox="0 0 16 14"><path d="M.500.500h4v13h-4zM.500 4.500h4M.500 9h4M6 2.500h4M12 2.500h4M6 7h4M12 7h4M6 11.500h4M12 11.500h4" fill="none" stroke="#8b8f93"/></svg></button>
    <button aria-label="大圖示"><svg><use href="#pics"/></svg></button>
  </div>
</div>

<footer class="taskbar">
  <button class="start" aria-label="開始"><svg viewBox="0 0 16 16"><path d="M0 2.300L6.800 1.300v6.200H0zM7.600 1.200L16 0v7.500H7.600zM0 8.400h6.800v6.300L0 13.700zM7.600 8.400H16V16l-8.400-1.200z" fill="#fff"/></svg></button>
  <label class="find"><svg><use href="#lens"/></svg><input type="text" placeholder="在這裡輸入文字來搜尋" aria-label="在這裡輸入文字來搜尋"></label>
  <div class="apps">
    <button aria-label="Cortana"><svg viewBox="0 0 24 24"><circle cx="12" cy="12" r="7" fill="none" stroke="#fff" stroke-width="1.800"/></svg></button>
    <button aria-label="工作檢視"><svg viewBox="0 0 24 24"><path d="M4.500 4v3h9V4M4.500 20v-3h9v3M4.500 9.500h9v5h-9zM18.500 4v3M18.500 11v9" fill="none" stroke="#fff" stroke-width="1.200"/><path d="M17 8h3v3h-3z" fill="#fff"/></svg></button>
    <button class="open" aria-label="Edge"><svg><use href="#edge"/></svg></button>
    <button aria-label="Store"><svg><use href="#store"/></svg></button>
    <button aria-label="Mail"><svg><use href="#mail"/></svg></button>
    <button aria-label="Telegram"><svg><use href="#telegram"/></svg></button>
    <button class="open" aria-label="檔案總管"><svg><use href="#explorer"/></svg></button>
    <button class="open" aria-label="Chrome"><svg><use href="#chrome"/></svg></button>
    <button aria-label="Office"><svg><use href="#office"/></svg></button>
    <button class="open" aria-label="Word"><svg><use href="#word"/></svg></button>
  </div>
  <div class="tray">
    <svg class="moon" viewBox="0 0 18 18"><path d="M11 0q7 3 7 9.500Q17 17.500 9 18 3 18 0 12.500q6 1.500 9-1.500 4-4 2-11z" fill="#ffcf1f"/></svg>
    <span class="weather">22°C&nbsp; 晴</span>
    <svg class="t16 up"><use href="#chev"/></svg>
    <svg class="t16" viewBox="0 0 16 16"><path d="M3.500 4.500h7v7h-7zM10.500 7l3-1.500v5l-3-1.500M4 2q3-2 6 0M4 14q3 2 6 0" fill="none" stroke="#fff" stroke-width="1.200"/></svg>
    <svg class="t16"><use href="#cloud-gray"/></svg>
    <svg class="t16"><use href="#onedrive"/></svg>
    <svg class="t16" viewBox="0 0 16 16"><path d="M4 2.500h11.500v8H3.500M9.500 10.500v3M6 13.500h7M.500 1.500h3v4h-3zM2 5.500v8" fill="none" stroke="#fff" stroke-width="1.100"/></svg>
    <svg class="t16" viewBox="0 0 16 16"><path d="M.500 6h2L6 3v10L2.500 10h-2zM8 6q1.500 2 0 4M10.500 4q3 4 0 8M13 2.500q4 5.500 0 11" fill="none" stroke="#fff" stroke-width="1.100"/></svg>
    <span class="lang">ENG</span>
    <time class="clock">21:19<br>11/12/2021</time>
    <button class="note" aria-label="通知"><svg viewBox="0 0 16 16"><path d="M0 0h16v12H8l-3 4v-4H0z" fill="#fff"/><path d="M3 3.500h10M3 6h10M3 8.500h7" stroke="#1c2b3e"/></svg><span>1</span></button>
    <i class="peek"></i>
  </div>
</footer>
</body>
</html>
```
FILE: styles.css
```css
* { box-sizing: border-box; }
body {
  margin: 0;
  min-height: 100vh;
  display: flex;
  flex-direction: column;
  background: #fff;
  color: #000;
  font: 12px/16px "Noto Sans", "Noto Sans CJK TC", sans-serif;
}
ul, h1, h2, h3, h4, h5, p { margin: 0; padding: 0; list-style: none; font-weight: 400; }
a { color: inherit; text-decoration: none; }
button { border: 0; margin: 0; padding: 0; background: none; color: inherit; font: inherit; white-space: nowrap; }
input { border: 0; padding: 0; background: none; font: inherit; flex: 1; min-width: 0; outline: 0; }
svg { display: block; flex: none; }
.sprite { position: absolute; width: 0; height: 0; }
.i16 { width: 16px; height: 16px; }
.up { transform: rotate(180deg); }

/* Title bar */
.titlebar { display: flex; justify-content: space-between; height: 23px; }
.quick { display: flex; align-items: center; gap: 8px; height: 24px; }
.tick { width: 1px; height: 12px; background: #777; }
.qdrop { width: 8px; height: 7px; margin-left: -4px; }
.win-title { color: #999; }
.controls { display: flex; padding-right: 2px; }
.controls button { width: 46px; height: 20px; display: grid; place-items: center; }
.controls svg { width: 10px; height: 10px; fill: none; stroke: #555; }

/* Tabs */
.tabs { display: flex; height: 24px; position: relative; z-index: 1; }
.tab { width: 53px; height: 24px; line-height: 22px; color: #333; }
.tab.file { width: 56px; height: 23px; background: #1e629d; color: #fff; }
.tab.active { width: 52px; background: #f5f6f7; border: 1px solid #dadbdc; border-bottom: 0; height: 25px; }
.help { margin-left: auto; display: flex; align-items: center; gap: 8px; padding-right: 3px; color: #777; }
.help svg { width: 10px; height: 10px; }
.q { width: 16px; height: 16px; border-radius: 8px; background: #0f6cbd; color: #fff; font-weight: 700; line-height: 16px; }

/* Ribbon */
.ribbon { display: flex; background: #f5f6f7; border: solid #dadbdc; border-width: 1px 0; height: 98px; padding: 2px 0; }
.group { display: flex; flex-direction: column; border-right: 1px solid #e2e3e4; padding-left: 4px; }
.g1 { width: 228px; padding-left: 7px; }
.g2 { width: 198px; }
.g3 { width: 136px; }
.g4 { width: 128px; }
.g5 { width: 84px; padding-left: 6px; }
.tools { display: flex; height: 74px; gap: 3px; }
.g2 .tools { gap: 2px; }
.g3 .tools, .g4 .tools { gap: 5px; }
.group h2 { margin-left: -4px; text-align: center; color: #444; font-size: 12px; line-height: 20px; }
.big { width: 40px; display: flex; flex-direction: column; align-items: center; line-height: 15px; padding-top: 5px; }
.big > svg { width: 30px; height: 30px; margin-bottom: 4px; }
.big > .pinbig { width: 22px; height: 22px; margin: 5px 0 7px; color: #a9b8d6; }
.big > .sq { width: 28px; height: 28px; margin: 2px 0 4px; }
.big > .tri { width: 6px; height: 4px; margin: 1px 0; }
.big.wide { width: 54px; }
.g2 .wide { width: 50px; }
.off { color: #8b8b8b; }
.small { padding-top: 2px; }
.small button { display: flex; align-items: center; gap: 4px; height: 22px; line-height: 22px; }
.small svg { width: 16px; height: 16px; }
.small .tri { width: 6px; height: 4px; margin-left: 1px; }
.g3 .small button { gap: 3px; }
.split { width: 1px; height: 56px; margin: 8px 3px 0; background: #dfe1e3; }

/* Location row */
.location { display: flex; height: 40px; padding: 5px 12px 5px 0; }
.history { display: flex; width: 106px; padding-left: 12px; gap: 16px; }
.history svg { width: 14px; height: 30px; fill: none; stroke: #ccc; stroke-width: 1.500; }
.history .recent { margin-right: -9px; margin-left: -7px; }
.history .strong svg { stroke: #666; stroke-width: 2; }
.address { flex: 1; display: flex; align-items: center; border: 1px solid #d9d9d9; padding-left: 4px; height: 30px; }
.crumb { width: 8px; height: 8px; margin: 0 8px 0 3px; fill: none; stroke: #555; stroke-width: 1.500; }
.drop { margin-left: auto; padding: 0 9px; height: 28px; color: #555; }
.drop svg { width: 11px; height: 11px; }
.refresh { width: 30px; height: 28px; border-left: 1px solid #d9d9d9; display: grid; place-items: center; }
.refresh svg { width: 12px; height: 12px; fill: none; stroke: #444; stroke-width: 1.300; }
.search { flex: 0 0 342px; display: flex; align-items: center; gap: 13px; margin-left: 12px; padding-left: 15px; border: 1px solid #d9d9d9; height: 30px; color: #777; }
.search svg { width: 12px; height: 12px; }
.search input::placeholder { color: #6d6d6d; opacity: 1; }

/* Main area */
main { flex: 1; display: flex; }
.tree { flex: none; width: 179px; padding: 18px 2px 0 0; border-right: 1px solid #f2f2f2; }
.tree ul { margin-bottom: 8px; }
.tree a { display: flex; align-items: center; gap: 5px; height: 24px; padding-left: 32px; overflow: hidden; white-space: nowrap; }
.tree a.root { padding-left: 24px; }
.tree a.current { background: #d9d9d9; }
.tree svg { width: 16px; height: 16px; }
.pin { color: #929aa1; }
.tree .pin { width: 10px; height: 10px; margin: 0 3px 0 auto; }
.masked { position: relative; }
.mask { position: absolute; left: 105px; top: 3px; width: 75px; height: 19px; border: 5px solid #000; background: #fff; z-index: 1; }

.content { flex: 985 1 0; min-width: 0; padding: 9px 9px 0 6px; border-right: 1px solid #f5f5f5; }
.heading { display: flex; align-items: center; gap: 4px; font-size: 15px; line-height: 20px; color: #1e3287; }
.heading svg { width: 12px; height: 12px; color: #777; }
.heading::after { content: ""; flex: 1; height: 1px; margin-left: 4px; background: #e2e2e2; }
.second { margin-top: 14px; }
.tiles { display: grid; grid-template-columns: repeat(4, 228px); grid-auto-rows: 64px; padding: 8px 0 0 9px; }
.tiles li { display: flex; padding-top: 7px; }
.tiles b, .tiles small { display: block; font: inherit; white-space: nowrap; }
.tiles small { color: #6d6d6d; }
.state { width: 20px; flex: none; display: grid; place-items: center; }
.state svg { width: 14px; height: 12px; }
.tiles .state { height: 48px; }
.pic { width: 40px; height: 40px; margin: 5px 5px 0 8px; }
.tiles .pin { width: 10px; height: 10px; margin-top: 2px; }

.recent-files { position: relative; margin-top: 13px; padding-left: 9px; }
.files { width: 520px; }
.files li { display: flex; align-items: center; height: 25px; white-space: nowrap; }
.files li > svg { width: 24px; height: 24px; margin-right: 9px; }
.files .selected { background: #d9d9d9; }
.cover { position: absolute; left: 515px; right: -10px; top: -9px; bottom: -3px; border: 5px solid #000; background: #fff; z-index: 1; }

/* Document preview */
.preview { flex: 756 1 0; min-width: 0; padding: 50px 0 0 14px; display: flex; justify-content: center; align-items: flex-start; }
.page { position: relative; flex: none; width: 490px; min-height: 732px; border: 1px solid #c4c4c4; padding: 26px 71px 0 59px; color: #333; font-family: Lato, sans-serif; }
.masthead { display: flex; justify-content: flex-end; gap: 13px; margin-right: -39px; text-align: right; }
.journal h4 { font-size: 13px; line-height: 14px; font-weight: 700; margin-bottom: 5px; }
.journal p { font-size: 8px; line-height: 9px; white-space: nowrap; }
.badge svg { width: 39px; height: 63px; margin: 1px 0 5px; }
.badge span { display: block; font-size: 8px; line-height: 14px; }
.mwc { font: 700 12px "Liberation Serif", serif; fill: #444; }
.page h1 { font-size: 19px; line-height: 21px; font-weight: 700; margin-top: 21px; white-space: nowrap; }
.author { display: flex; gap: 15px; margin-top: 3px; font-size: 11px; line-height: 12px; }
.author b, .author i { display: block; }
.author i { font: italic 9px/10px "Liberation Serif", serif; }
.page h5 { margin-top: 25px; padding-left: 20px; background: #e6e6e8; font-size: 8px; line-height: 18px; letter-spacing: 1px; }
.abstract { margin-top: 10px; font: 9px/12px "Open Sans", sans-serif; }
.page p span { display: block; white-space: nowrap; text-align: justify; text-align-last: justify; }
.page p .last { text-align-last: left; }
.keys { display: flex; gap: 10px; margin-top: 4px; font: 9px/18px "Open Sans", sans-serif; }
.keys small { font-size: 7px; }
.text { margin-top: 36px; font: 11px/14px "Liberation Serif", serif; }
.text .indent { padding-left: 20px; }
.reader { position: absolute; left: 493px; bottom: 6px; width: 114px; height: 111px; }

/* Status bar */
.status { display: flex; align-items: center; gap: 22px; height: 24px; padding: 1px 6px 0 14px; color: #1f3a5f; }
.views { margin-left: auto; display: flex; gap: 7px; }
.views svg { width: 16px; height: 14px; }

/* Taskbar */
.taskbar { display: flex; height: 40px; background: #1c2a3d; color: #fff; }
.start { width: 48px; display: grid; place-items: center; }
.start svg { width: 16px; height: 16px; }
.find { width: 343px; display: flex; align-items: center; gap: 12px; padding-left: 12px; background: #f2f2f2; border: 1px solid #c8c8c8; color: #222; font-size: 16px; }
.find svg { width: 16px; height: 16px; }
.find input::placeholder { color: #444; opacity: 1; }
.apps { display: flex; }
.apps button { width: 49px; height: 40px; display: grid; place-items: center; position: relative; }
.apps svg { width: 24px; height: 24px; }
.apps .open::after { content: ""; position: absolute; left: 5px; right: 4px; bottom: 0; height: 2px; background: #76b9ed; }
.tray { margin-left: auto; display: flex; align-items: center; gap: 8px; padding-right: 4px; }
.moon { width: 18px; height: 18px; margin-right: 3px; }
.weather { font-size: 15px; width: 61px; white-space: nowrap; margin-right: 1px; }
.t16 { width: 16px; height: 16px; }
.t16.up { padding: 2px; }
.lang { font-size: 12px; width: 26px; margin-left: 2px; }
.clock { width: 66px; text-align: center; font-size: 12px; line-height: 18px; }
.note { position: relative; width: 16px; height: 16px; margin: 0 12px 0 8px; }
.note span { position: absolute; left: 8px; top: 7px; width: 16px; height: 16px; border: 1px solid #999; border-radius: 8px; background: #222; font-size: 11px; line-height: 14px; }
.peek { width: 1px; height: 40px; background: #66717f; }
```
